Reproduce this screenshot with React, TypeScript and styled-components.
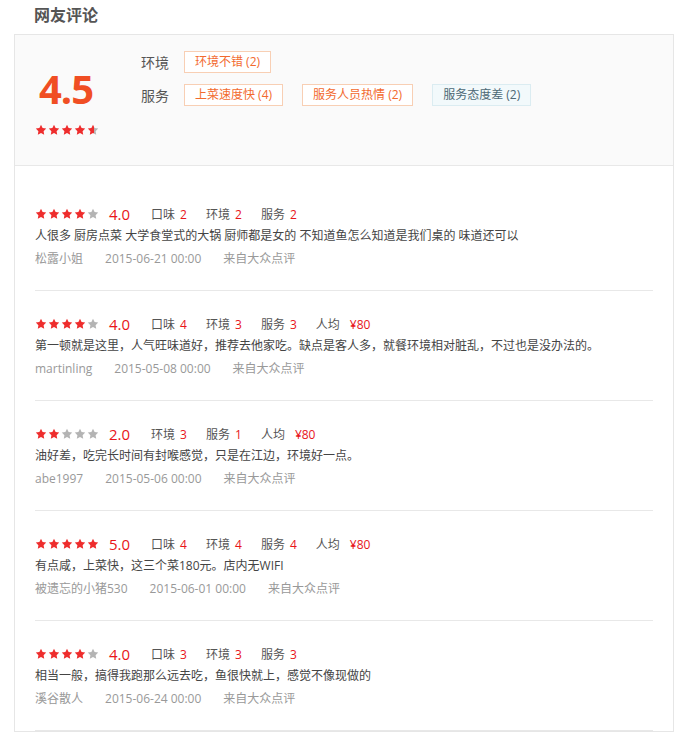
import React from "react";
import styled, { createGlobalStyle } from "styled-components";

const GlobalStyle = createGlobalStyle`
  body {
    margin: 0;
    background: #fff;
    font-family: "Open Sans", "Noto Sans CJK SC", sans-serif;
    color: #555;
  }
`;

const Page = styled.div`
  width: 660px;
  padding-left: 14px;
`;

const Title = styled.h3`
  margin: 0;
  height: 34px;
  line-height: 30px;
  padding-left: 20px;
  font-size: 16px;
  font-weight: bold;
  color: #555;
`;

const Box = styled.div`
  border: 1px solid #e6e6e6;
`;

const Summary = styled.div`
  display: flex;
  height: 130px;
  background: #fafafa;
  border-bottom: 1px solid #e8e8e8;
`;

const ScoreCol = styled.div`
  width: 126px;
  padding-left: 20px;
  box-sizing: border-box;
`;

const BigScore = styled.div`
  margin-top: 30px;
  font-size: 40px;
  line-height: 48px;
  font-weight: bold;
  color: #f04e23;
  padding-left: 4px;
  letter-spacing: -1px;
`;

const TagCol = styled.div`
  display: flex;
  flex-direction: column;
  gap: 11px;
  padding-top: 16px;
`;

const TagRow = styled.div`
  display: flex;
  align-items: center;
  height: 22px;
`;

const TagLabel = styled.span`
  width: 43px;
  font-size: 14px;
  color: #555;
`;

const Tag = styled.span<{ $bad?: boolean }>`
  display: inline-block;
  height: 20px;
  line-height: 20px;
  padding: 0 10px;
  margin-right: 19px;
  font-size: 12px;
  border: 1px solid ${(p) => (p.$bad ? "#dbecf1" : "#f8cfb4")};
  background: ${(p) => (p.$bad ? "#f2f9fb" : "#fff")};
  color: ${(p) => (p.$bad ? "#4d6875" : "#f26a2e")};
`;

const StarLine = styled.div<{ $top?: number }>`
  display: flex;
  gap: 1px;
  margin-top: ${(p) => p.$top ?? 0}px;
`;

const List = styled.div`
  padding: 15px 20px 0;
`;

const Item = styled.div`
  padding: 22px 0 19px;
  border-bottom: 1px solid #e8e8e8;
`;

const RateRow = styled.div`
  display: flex;
  align-items: center;
  height: 22px;
`;

const Score = styled.span`
  margin-left: 10px;
  margin-right: 21px;
  font-size: 15px;
  color: #e8141a;
`;

const Sub = styled.span<{ $gap?: number }>`
  display: inline-flex;
  align-items: center;
  gap: ${(p) => p.$gap ?? 5}px;
  margin-right: 19px;
  font-size: 12px;
  color: #555;
`;

const Num = styled.span`
  color: #e8141a;
`;

const Text = styled.p`
  margin: 0;
  line-height: 22px;
  font-size: 12px;
  color: #444;
`;

const Meta = styled.div`
  display: flex;
  gap: 22px;
  line-height: 24px;
  font-size: 12px;
  color: #999;
`;

const STAR =
  "M12 1.6l3.2 6.6 7.2 1-5.2 5.1 1.2 7.2L12 18.1l-6.4 3.4 1.2-7.2L1.6 9.2l7.2-1z";

let gid = 0;

function Star({ fill }: { fill: number }) {
  const id = React.useMemo(() => `sg${gid++}`, []);
  return (
    <svg width="12" height="12" viewBox="0 0 24 24">
      <defs>
        <linearGradient id={id} x1="0" x2="1" y1="0" y2="0">
          <stop offset={fill} stopColor="#ee2d2d" />
          <stop offset={fill} stopColor="#b4b4b4" />
        </linearGradient>
      </defs>
      <path d={STAR} fill={`url(#${id})`} />
    </svg>
  );
}

function Stars({ value, top }: { value: number; top?: number }) {
  return (
    <StarLine $top={top}>
      {[0, 1, 2, 3, 4].map((i) => (
        <Star key={i} fill={Math.max(0, Math.min(1, value - i))} />
      ))}
    </StarLine>
  );
}

type Review = {
  rate: number;
  subs: [string, string][];
  text: string;
  user: string;
  date: string;
};

const reviews: Review[] = [
  {
    rate: 4,
    subs: [["口味", "2"], ["环境", "2"], ["服务", "2"]],
    text: "人很多 厨房点菜 大学食堂式的大锅 厨师都是女的 不知道鱼怎么知道是我们桌的 味道还可以",
    user: "松露小姐",
    date: "2015-06-21 00:00",
  },
  {
    rate: 4,
    subs: [["口味", "4"], ["环境", "3"], ["服务", "3"], ["人均", "¥80"]],
    text: "第一顿就是这里，人气旺味道好，推荐去他家吃。缺点是客人多，就餐环境相对脏乱，不过也是没办法的。",
    user: "martinling",
    date: "2015-05-08 00:00",
  },
  {
    rate: 2,
    subs: [["环境", "3"], ["服务", "1"], ["人均", "¥80"]],
    text: "油好差，吃完长时间有封喉感觉，只是在江边，环境好一点。",
    user: "abe1997",
    date: "2015-05-06 00:00",
  },
  {
    rate: 5,
    subs: [["口味", "4"], ["环境", "4"], ["服务", "4"], ["人均", "¥80"]],
    text: "有点咸，上菜快，这三个菜180元。店内无WIFI",
    user: "被遗忘的小猪530",
    date: "2015-06-01 00:00",
  },
  {
    rate: 4,
    subs: [["口味", "3"], ["环境", "3"], ["服务", "3"]],
    text: "相当一般，搞得我跑那么远去吃，鱼很快就上，感觉不像现做的",
    user: "溪谷散人",
    date: "2015-06-24 00:00",
  },
];

export default function App() {
  return (
    <Page>
      <GlobalStyle />
      <Title>网友评论</Title>
      <Box>
        <Summary>
          <ScoreCol>
            <BigScore>4.5</BigScore>
            <Stars value={4.6} top={11} />
          </ScoreCol>
          <TagCol>
            <TagRow>
              <TagLabel>环境</TagLabel>
              <Tag>环境不错 (2)</Tag>
            </TagRow>
            <TagRow>
              <TagLabel>服务</TagLabel>
              <Tag>上菜速度快 (4)</Tag>
              <Tag>服务人员热情 (2)</Tag>
              <Tag $bad>服务态度差 (2)</Tag>
            </TagRow>
          </TagCol>
        </Summary>
        <List>
          {reviews.map((r) => (
            <Item key={r.user}>
              <RateRow>
                <Stars value={r.rate} />
                <Score>{r.rate.toFixed(1)}</Score>
                {r.subs.map(([k, v]) => (
                  <Sub key={k} $gap={k === "人均" ? 10 : 5}>
                    {k}
                    <Num>{v}</Num>
                  </Sub>
                ))}
              </RateRow>
              <Text>{r.text}</Text>
              <Meta>
                <span>{r.user}</span>
                <span>{r.date}</span>
                <span>来自大众点评</span>
              </Meta>
            </Item>
          ))}
        </List>
      </Box>
    </Page>
  );
}
